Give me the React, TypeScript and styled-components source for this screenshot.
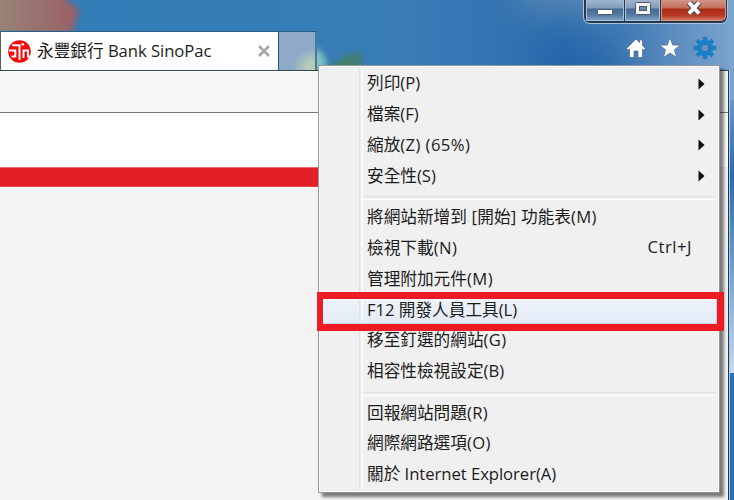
import React from "react";
import styled, { createGlobalStyle } from "styled-components";

const GlobalStyle = createGlobalStyle`
  * { box-sizing: border-box; }
  body { margin: 0; overflow: hidden; }
`;

const Desktop = styled.div`
  position: relative;
  width: 734px;
  height: 500px;
  overflow: hidden;
  display: flex;
  flex-direction: column;
  color: #1c1c1c;
  font-family: "Open Sans", "Noto Sans CJK TC", sans-serif;
  font-size: 16.67px;
  background: #2e71b3;
`;

const Wallpaper = styled.svg`
  position: absolute;
  inset: 0;
`;

const TitleArea = styled.header`
  position: relative;
  height: 70px;
  flex: none;
  display: flex;
  justify-content: space-between;
  align-items: flex-end;
`;

const Tabs = styled.div`
  display: flex;
  height: 39px;
  width: 317px;
  border-top: 1px solid #285e8c;
`;

const ActiveTab = styled.div`
  display: flex;
  align-items: center;
  width: 278px;
  height: 38px;
  padding: 0 8px 0 7px;
  background: #fff;
  border-left: 1px solid #6b5b58;
`;

const TabTitle = styled.span`
  flex: 1;
  margin-left: 6px;
  padding-bottom: 3px;
  white-space: nowrap;
`;

const NewTab = styled.div`
  flex: 1;
  height: 38px;
  border-left: 1px solid #1c568b;
  border-right: 2px solid #4a7899;
  background: radial-gradient(circle at 34px 36px, #b5ccb9 6px, #8faac8 20px);
`;

const Controls = styled.div`
  display: flex;
  flex-direction: column;
  align-items: flex-end;
  justify-content: space-between;
  height: 70px;
`;

const Caption = styled.div`
  display: flex;
  width: 145px;
  height: 24px;
  margin-right: 6px;
  padding: 0 1px 2px 2px;
  border: 1px solid #a9c5df;
  border-top: 0;
  border-radius: 0 0 7px 7px;
  background: #263850;
`;

const CaptionButton = styled.div<{ $width: number; $close?: boolean }>`
  width: ${(p) => p.$width}px;
  height: 21px;
  display: flex;
  justify-content: center;
  border: 1px solid ${(p) => (p.$close ? "#d89081" : "#a9bfd5")};
  border-top: 0;
  border-radius: ${(p) => (p.$close ? "0 0 5px 0" : "0 0 1px 1px")};
  margin-right: ${(p) => (p.$close ? 0 : 1)}px;
  background: ${(p) =>
    p.$close
      ? "linear-gradient(#d19588 0, #c46d5b 8px, #aa2c17 9px, #b63621 15px, #d4755c)"
      : "linear-gradient(#a0b5ce 0, #819cba 8px, #456a95 9px, #547ba5 15px, #7e9fc3)"};
`;

const Tools = styled.div`
  display: flex;
  gap: 11px;
  margin-right: 17px;
  margin-bottom: 10px;
`;

const Browser = styled.main`
  position: relative;
  width: 729px;
  flex: 1;
  border-top: 1px solid #304858;
  border-right: 1px solid #12395f;
  background: #f3f3f3;
  box-shadow: 1px 0 0 #a9cbe7;
`;

const CommandBar = styled.div`
  height: 42px;
  background: #f6f6f6;
  border-top: 1px solid #fff;
  border-bottom: 1px solid #777;
`;

const PageTop = styled.div`
  height: 54px;
  background: #fff;
`;

const BrandBand = styled.div`
  width: 330px;
  height: 20px;
  background: #e21f24;
  border-top: 1px solid #e56a6c;
  border-bottom: 1px solid #e24448;
`;

const Menu = styled.div`
  position: absolute;
  left: 318px;
  top: 65px;
  width: 402px;
  height: 428px;
  padding: 1px 2px;
  border: 1px solid #979797;
  background: #f0f0f0;
  box-shadow: inset 0 0 0 1px #f9f9f9, 4px 4px 3px rgba(0, 0, 0, 0.5);
  &::before {
    content: "";
    position: absolute;
    left: 40px;
    top: 2px;
    width: 2px;
    height: 422px;
    border-left: 1px solid #e2e3e3;
    border-right: 1px solid #fff;
  }
`;

const MenuRow = styled.div<{ $active?: boolean }>`
  display: flex;
  align-items: center;
  height: 30.8px;
  padding: 0 12px 0 46px;
  white-space: pre;
  background: ${(p) => (p.$active ? "linear-gradient(#f1f4f9, #e3ebf7)" : "none")};
`;

const Label = styled.span`
  flex: 1;
`;

const Latin = styled.span<{ $track?: number }>`
  letter-spacing: ${(p) => p.$track ?? -0.05}px;
`;

const Shortcut = styled.span`
  margin-right: 13px;
  letter-spacing: 0.5px;
`;

const Arrow = styled.svg`
  margin-top: 3px;
`;

const Separator = styled.div`
  height: 10.6px;
  margin-left: 40px;
  margin-right: 1px;
  padding-top: 6px;
  &::before {
    content: "";
    display: block;
    height: 2px;
    border-top: 1px solid #dfdfdf;
    border-bottom: 1px solid #fff;
  }
`;

const Highlight = styled.div`
  position: absolute;
  left: 317px;
  top: 292px;
  width: 407px;
  height: 39px;
  border: 7px solid #ed1c24;
  border-left-width: 6px;
  box-shadow: inset -1px -1px 0 #c3d7ef, inset 1px 1px 0 #f7fbff;
`;

type Item = { han?: string; latin?: string; lead?: string; tail?: string; track?: number; sub?: boolean; keys?: string; active?: boolean };

const groups: Item[][] = [
  [
    { han: "列印", latin: "(P)", sub: true },
    { han: "檔案", latin: "(F)", sub: true },
    { han: "縮放", latin: "(Z) (65%)", track: 0.4, sub: true },
    { han: "安全性", latin: "(S)", sub: true },
  ],
  [
    { han: "將網站新增到", latin: " [", tail: "開始|] |功能表|(M)", track: 0.3 },
    { han: "檢視下載", latin: "(N)", track: 0.4, keys: "Ctrl+J" },
    { han: "管理附加元件", latin: "(M)", track: 0.4 },
    { lead: "F12 ", han: "開發人員工具", latin: "(L)", active: true },
    { han: "移至釘選的網站", latin: "(G)", track: 0.3 },
    { han: "相容性檢視設定", latin: "(B)" },
  ],
  [
    { han: "回報網站問題", latin: "(R)", track: 0.3 },
    { han: "網際網路選項", latin: "(O)", track: 0.3 },
    { han: "關於", latin: " Internet Explorer(A)" },
  ],
];

const MenuItem = ({ item }: { item: Item }) => (
  <MenuRow $active={item.active}>
    <Label>
      {item.lead && <Latin>{item.lead}</Latin>}
      {item.han}
      <Latin $track={item.track}>{item.latin}</Latin>
      {item.tail?.split("|").map((part, i) => (i % 2 ? <Latin key={i} $track={item.track}>{part}</Latin> : <span key={i}>{part}</span>))}
    </Label>
    {item.keys && <Shortcut>{item.keys}</Shortcut>}
    {item.sub && (
      <Arrow width="7" height="12" viewBox="0 0 7 12">
        <path d="M0.5 0.5L6.5 6L0.5 11.5Z" fill="#111" />
      </Arrow>
    )}
  </MenuRow>
);

const BankLogo = () => (
  <svg width="23" height="23" viewBox="0 0 23 23">
    <circle cx="11.5" cy="11.5" r="11.3" fill="#f40808" />
    <g fill="none" stroke="#fff" strokeWidth="2">
      <path d="M4 5.3H11.5V20M1 10.5H7.3V16.5H3.5" />
      <path d="M15.5 18V10.5H20V16.5H22" />
    </g>
    <circle cx="14.8" cy="4.3" r="1.4" fill="#fff" />
  </svg>
);

const Gear = () => (
  <svg width="24" height="24" viewBox="-12 -12 24 24">
    <g fill="#1482cf" stroke="#30618d" strokeWidth=".5">
      {Array.from({ length: 8 }, (_, i) => (
        <path key={i} d="M-2.2-6L-1.7-10.8H1.7L2.2-6Z" transform={`rotate(${i * 45})`} />
      ))}
    </g>
    <circle r="5.9" fill="none" stroke="#1482cf" strokeWidth="4" />
    <circle r="3.7" fill="#6d97c2" stroke="#315f8c" strokeWidth=".8" />
  </svg>
);

export default function App() {
  return (
    <Desktop>
      <GlobalStyle />
      <Wallpaper width="734" height="500">
        <defs>
          <linearGradient id="sky">
            <stop offset="0" stopColor="#307eb7" />
            <stop offset=".55" stopColor="#397cb8" />
            <stop offset=".77" stopColor="#2e6dad" />
            <stop offset=".88" stopColor="#4c82b9" />
            <stop offset="1" stopColor="#7ba4ce" />
          </linearGradient>
          <linearGradient id="petal">
            <stop offset="0" stopColor="#99887c" />
            <stop offset="1" stopColor="#9b5d62" />
          </linearGradient>
          <linearGradient id="edge" x2="0" y2="1">
            <stop offset="0" stopColor="#6795c4" />
            <stop offset=".28" stopColor="#2d6ba9" />
            <stop offset=".5" stopColor="#578dc0" />
            <stop offset="1" stopColor="#c7d9ea" />
          </linearGradient>
          <filter id="soft" x="-20%" y="-20%" width="140%" height="140%"><feGaussianBlur stdDeviation="3" /></filter>
          <filter id="haze" x="-50%" y="-100%" width="200%" height="300%"><feGaussianBlur stdDeviation="16" /></filter>
        </defs>
        <rect width="734" height="500" fill="url(#sky)" />
        <ellipse cx="580" cy="66" rx="50" ry="24" fill="#1d61a6" opacity=".6" filter="url(#haze)" />
        <ellipse cx="570" cy="-5" rx="60" ry="15" fill="#7898b7" opacity=".7" filter="url(#haze)" />
        <path d="M-10-10H55L79 10L72 34H-10Z" fill="url(#petal)" filter="url(#soft)" />
        <circle cx="310" cy="64" r="16" fill="#83c6c1" filter="url(#soft)" />
        <path d="M327 70Q344 52 362 53L359 73Z" fill="#437f67" filter="url(#soft)" />
        <rect x="730" y="100" width="4" height="273" fill="url(#edge)" />
        <rect x="730" y="373" width="4" height="127" fill="#2c70b2" />
      </Wallpaper>
      <TitleArea>
        <Tabs>
          <ActiveTab>
            <BankLogo />
            <TabTitle>永豐銀行<Latin> Bank SinoPac</Latin></TabTitle>
            <svg width="12" height="12" viewBox="0 0 12 12">
              <path d="M1 1L11 11M11 1L1 11" stroke="#a8a8a8" strokeWidth="2.7" />
            </svg>
          </ActiveTab>
          <NewTab />
        </Tabs>
        <Controls>
          <Caption>
            <CaptionButton $width={38}>
              <svg width="18" height="21"><rect x="1.5" y="9.5" width="15" height="5" rx="1" fill="#fff" stroke="#505967" /></svg>
            </CaptionButton>
            <CaptionButton $width={36}>
              <svg width="18" height="21">
                <rect x="1.5" y="2.5" width="15" height="12" rx="1" fill="#f5f6f8" stroke="#505967" />
                <rect x="5.5" y="6.5" width="7" height="4" fill="#658ab2" stroke="#505967" />
              </svg>
            </CaptionButton>
            <CaptionButton $width={65} $close>
              <svg width="18" height="21">
                <path d="M4 2.5L14 13.5M14 2.5L4 13.5" stroke="#584b55" strokeWidth="6" />
                <path d="M4 2.5L14 13.5M14 2.5L4 13.5" stroke="#fff" strokeWidth="3.8" />
              </svg>
            </CaptionButton>
          </Caption>
          <Tools>
            <svg width="22" height="24" viewBox="0 0 22 24">
              <path d="M1.5 12.5L11 3L14.5 6.5V4H17.5V9.5L20.5 12.5L18.5 14L17.5 13V21.5H13V15H9V21.5H4.5V13L3 14Z" fill="#fff" stroke="#55718f" strokeWidth=".8" />
            </svg>
            <svg width="24" height="24" viewBox="0 0 24 24">
              <path d="M12 1.5L14.7 9.1H22.5L16.4 13.8L18.7 21.5L12 17L5.3 21.5L7.6 13.8L1.5 9.1H9.3Z" fill="#fff" stroke="#55718f" strokeWidth=".8" />
            </svg>
            <Gear />
          </Tools>
        </Controls>
      </TitleArea>
      <Browser>
        <CommandBar />
        <PageTop />
        <BrandBand />
      </Browser>
      <Menu>
        {groups.map((group, i) => (
          <React.Fragment key={i}>
            {i > 0 && <Separator />}
            {group.map((item) => <MenuItem key={item.han} item={item} />)}
          </React.Fragment>
        ))}
      </Menu>
      <Highlight />
    </Desktop>
  );
}
